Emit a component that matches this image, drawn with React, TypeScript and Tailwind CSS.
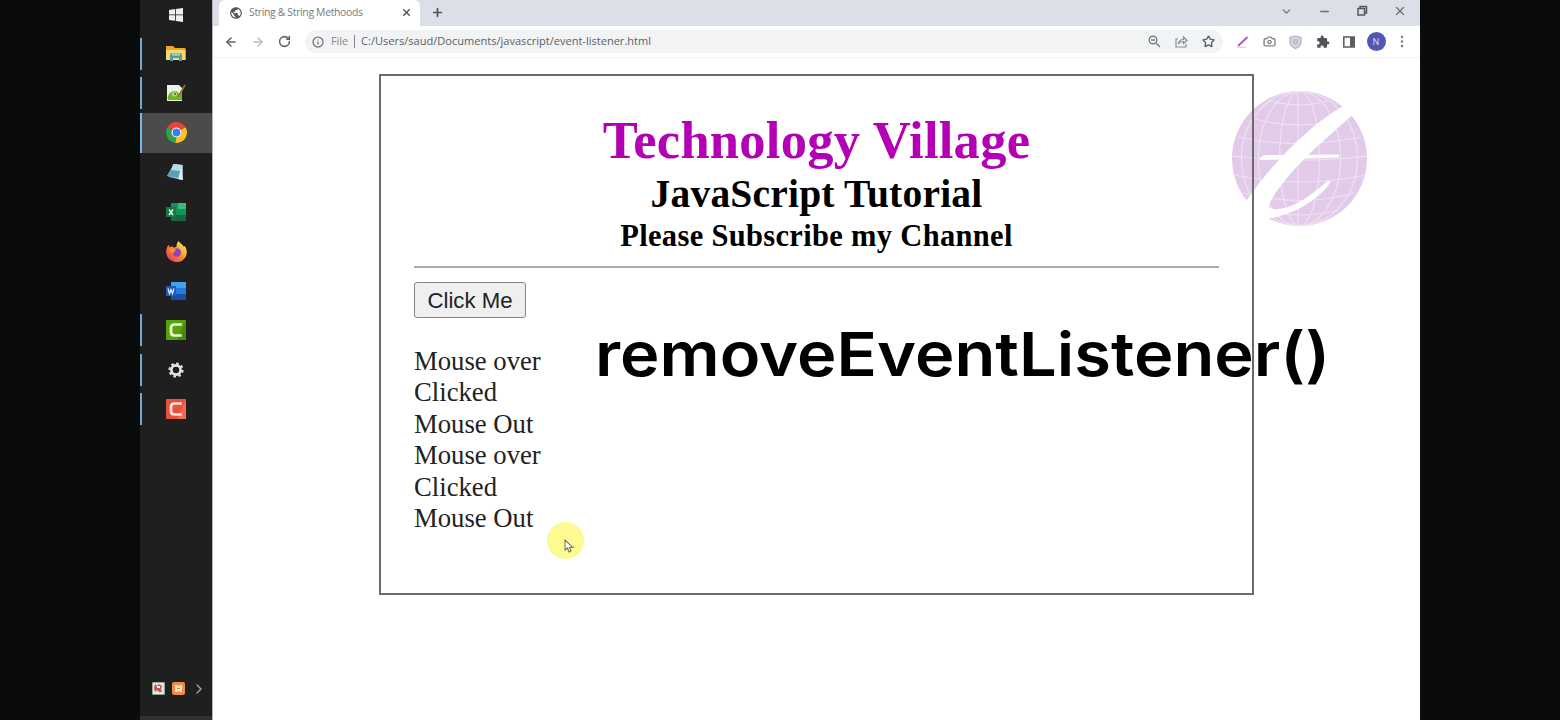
import React from "react";
import {
  ArrowLeft, ArrowRight, RotateCw, Info, Plus, X, ChevronDown, ChevronRight, Minus,
  Star, Camera,
} from "lucide-react";
import { MdExtension, MdPublic } from "react-icons/md";

const Windows = () => (
  <svg className="h-[14px] w-[14px]" viewBox="0 0 14 14" fill="#efefef">
    <path d="M0 2l6-.9v5.5H0zM6.8 1L14 0v6.6H6.8zM0 7.3h6v5.5L0 12zM6.8 7.3H14V14l-7.200-1z" />
  </svg>
);
const Folder = () => (
  <svg className="h-5 w-5" viewBox="0 0 20 20">
    <path d="M0 2h7l2 2h10.500v12H0z" fill="#e6a92c" />
    <path d="M0 6h19.500v10H0z" fill="#fbd668" />
    <path d="M4 17v-6q0-2 2-2h8q2 0 2 2v6h-3v-3H7v3z" fill="#4a9fa8" />
    <path d="M6 9h8v3H6z" fill="#8fc9b8" />
  </svg>
);
const Notepad = () => (
  <svg className="h-5 w-5" viewBox="0 0 20 20">
    <path d="M1 2h12l3 3v13H1z" fill="#eef3ea" />
    <path d="M2 17c-1-4 1-8 6-9 4 0 5 2 5 4l3-3v8z" fill="#6db81e" />
    <circle cx="8.500" cy="11" r="2.500" fill="#b6dc86" />
    <circle cx="9" cy="11" r="1.200" fill="#4b8820" />
    <path d="M12 14L19 2" stroke="#8b7a22" strokeWidth="1.600" />
  </svg>
);
const Chrome = () => (
  <svg className="h-[21px] w-[21px]" viewBox="0 0 20 20">
    <path d="M10 10L1.340 5A10 10 0 0 1 18.660 5z" fill="#e94435" />
    <path d="M10 10L18.660 5A10 10 0 0 1 10 20z" fill="#fcc31e" />
    <path d="M10 10L10 20A10 10 0 0 1 1.340 5z" fill="#2da14f" />
    <path d="M10 5.500h8.900L18.660 5H10z" fill="#e94435" />
    <path d="M13.900 12.200L10 20l-1-.1 1-5z" fill="#fcc31e" />
    <circle cx="10" cy="10" r="4.700" fill="#fff" />
    <circle cx="10" cy="10" r="3.700" fill="#3b7ded" />
  </svg>
);
const Notes = () => (
  <svg className="h-5 w-5" viewBox="0 0 20 20">
    <path d="M7 2l10 1-1 15-13-3z" fill="#8cc3d3" />
    <path d="M8 2l8 1-3 13-12-2z" fill="#b7dde6" />
    <path d="M5 8l9 1-1 7-12-2z" fill="#5a9fb5" />
    <path d="M16 4l1 14-5-1z" fill="#e4ecec" />
  </svg>
);
const Excel = () => (
  <svg className="h-5 w-5" viewBox="0 0 20 20">
    <path d="M5 1h15v18H5z" fill="#1c8f57" />
    <path d="M12 1h8v6h-8z" fill="#35bd7b" />
    <path d="M12 7h8v6h-8z" fill="#159257" />
    <path d="M5 13h15v6H5z" fill="#17663d" />
    <path d="M0 5h10v10H0z" fill="#137a43" />
    <path d="M3 7.500l4 5.500M7 7.500l-4 5.500" stroke="#e6f5ec" strokeWidth="1.500" />
  </svg>
);
const Firefox = () => (
  <svg className="h-[21px] w-[21px]" viewBox="0 0 20 20">
    <defs>
      <linearGradient id="fx" x1="1" y1="0" x2="0" y2="1">
        <stop offset="0.100" stopColor="#fff04a" />
        <stop offset="0.500" stopColor="#ff8a2b" />
        <stop offset="1" stopColor="#f0256b" />
      </linearGradient>
    </defs>
    <path d="M12 0c1 2 3 2.500 4.500 5L18 5c2 3 2.500 7 .5 10.500A10 10 0 0 1 .2 11C0 8 1 5.500 2.500 3.500L3.500 6 6 5l1.500 1.500L10 5.500C10 3 10.500 1.500 12 0z" fill="url(#fx)" />
    <circle cx="10.300" cy="11" r="4" fill="#8b47c2" />
    <path d="M3 8c3-1 5-1 7 1-2 .2-3 1-2.500 2.500-2 0-3.500-1.500-4.500-3.500z" fill="#ff9b28" />
  </svg>
);
const Word = () => (
  <svg className="h-5 w-5" viewBox="0 0 20 20">
    <path d="M5 1h15v6H5z" fill="#43a0ea" />
    <path d="M5 7h15v6H5z" fill="#277bd8" />
    <path d="M5 13h15v6H5z" fill="#174faa" />
    <path d="M0 5h10v10H0z" fill="#1c5cbc" />
    <path d="M2 7.500l1.500 5L5 8.500l1.500 4 1.500-5" stroke="#eaf2ff" strokeWidth="1.200" fill="none" />
  </svg>
);
const Gear = () => (
  <svg className="h-[16px] w-[16px]" viewBox="0 0 16 16" fill="none" stroke="#e8e8e8">
    <circle cx="8" cy="8" r="4.600" strokeWidth="2.600" />
    <circle cx="8" cy="8" r="6.600" strokeWidth="2" strokeDasharray="2.590 2.590" />
  </svg>
);
const CIcon = ({ red = false }: { red?: boolean }) => (
  <svg className="h-5 w-5" viewBox="0 0 20 20">
    <rect width="20" height="20" rx="1" fill={red ? "#e9513d" : "#58a20c"} />
    <path d="M20 0v20H11z" fill={red ? "#f26a50" : "#458907"} />
    <path d="M15.800 4.500H8.500Q5 4.500 5 8v4q0 3.500 3.500 3.500h7.300" fill="none" stroke={red ? "#ffe3dd" : "#ebf8d6"} strokeWidth="2.700" />
  </svg>
);

const apps: { icon: React.ReactNode; open?: boolean; active?: boolean }[] = [
  { icon: <Folder />, open: true },
  { icon: <Notepad />, open: true },
  { icon: <Chrome />, active: true },
  { icon: <Notes /> },
  { icon: <Excel /> },
  { icon: <Firefox /> },
  { icon: <Word /> },
  { icon: <CIcon />, open: true },
  { icon: <Gear />, open: true },
  { icon: <CIcon red />, open: true },
];

const Taskbar = () => (
  <aside className="flex w-[72px] shrink-0 flex-col bg-[#1f1f1f]">
    <div className="flex h-[34px] items-center justify-center pb-1"><Windows /></div>
    {apps.map((a, i) => (
      <div key={i} className={a.active ? "flex h-[39.500px] items-center bg-[#4b4b4b]" : "flex h-[39.500px] items-center"}>
        <div className={a.active ? "h-full w-[2px] bg-[#76b9ed]" : a.open ? "h-8 w-[2px] bg-[#6fa9cf]" : "h-8 w-[2px]"} />
        <div className="flex flex-1 justify-center pr-[2px]">{a.icon}</div>
      </div>
    ))}
    <div className="mt-auto flex h-[58px] items-start gap-2 pl-3 pt-6">
      <svg className="h-[13px] w-[13px]" viewBox="0 0 13 13">
        <rect width="13" height="13" fill="#dfe8de" stroke="#47644c" />
        <path d="M3 2l2 2 2-2 3 2-1 3 1 3H7L5 8l-2 2-1-4z" fill="#c9535b" />
        <path d="M5 4h3v2H5z" fill="#eee" />
      </svg>
      <svg className="-ml-px h-[13px] w-[13px]" viewBox="0 0 13 13">
        <rect width="13" height="13" rx="2" fill="#ef8b4b" />
        <path d="M3 3h2l1.500 1L8 3h2v7H8L6.500 9 5 10H3z" fill="#ffe0bd" />
        <path d="M5 6h3v1H5z" fill="#e98143" />
      </svg>
      <ChevronRight className="-ml-0.5 -mt-px h-[16px] w-[16px] text-[#a0a0a0]" strokeWidth={2.200} />
    </div>
    <div className="h-[4px] bg-[#303030]" />
  </aside>
);

const Browser = () => (
  <header className="h-[58px] shrink-0 border-b border-[#eff0f2] bg-white font-['Open_Sans',sans-serif]">
    <div className="flex h-[26px] bg-[#dcdfe8]">
      <div className="ml-[6px] flex h-[26px] w-[201px] items-center rounded-t-md bg-white pb-px pl-[10px] pr-[8px] text-[#777b80]">
        <MdPublic className="h-[14px] w-[14px] text-[#53575b]" />
        <span className="ml-[6px] whitespace-nowrap text-[10.400px] tracking-[-0.320px]">String &amp; String Methoods</span>
        <X className="ml-auto h-[11px] w-[11px] text-[#4b4e52]" strokeWidth={3} />
      </div>
      <Plus className="ml-[11px] mt-[6px] h-[13px] w-[13px] text-[#505359]" strokeWidth={3.200} />
      <div className="ml-auto flex items-center gap-[25px] pb-[4px] pr-[13px] text-[#6b6f74]">
        <ChevronDown className="h-[13px] w-[13px]" strokeWidth={2.200} />
        <Minus className="h-[13px] w-[13px]" strokeWidth={2.500} />
        <svg className="h-[12px] w-[12px]" viewBox="0 0 12 12" fill="none" stroke="#55585d" strokeWidth="1.500">
          <path d="M2 3.500h6.500V10H2zM4 3V1.500h6.500V8H9" />
        </svg>
        <X className="h-[14px] w-[14px]" strokeWidth={2.200} />
      </div>
    </div>
    <div className="flex h-[31px] items-center">
      <div className="flex w-[92px] items-center gap-[13px] pl-[11px]">
        <ArrowLeft className="h-[14px] w-[14px] text-[#606367]" strokeWidth={2.600} />
        <ArrowRight className="h-[14px] w-[14px] text-[#bcbec1]" strokeWidth={2.400} />
        <RotateCw className="h-[13px] w-[13px] text-[#606367]" strokeWidth={2.800} />
      </div>
      <div className="flex h-[23px] w-[918px] items-center rounded-full bg-[#f1f3f4] pl-[7px] text-[11.050px] text-[#5d6064]">
        <Info className="h-[12px] w-[12px] text-[#707377]" strokeWidth={2.500} />
        <span className="ml-[7px] text-[10.800px] text-[#85888b]">File</span>
        <span className="mx-[6px] h-[13px] w-px bg-[#85888b]" />
        <span className="whitespace-nowrap">C:/Users/saud/Documents/javascript/event-listener.html</span>
        <div className="ml-auto flex items-center gap-[14px] pr-[8px]">
          <svg className="h-[13px] w-[13px]" viewBox="0 0 13 13" fill="none" stroke="#7a7e82" strokeWidth="1.400">
            <circle cx="5" cy="5" r="3.800" /><path d="M8 8l4 4M3 5h4" />
          </svg>
          <svg className="h-[13px] w-[13px]" viewBox="0 0 13 13" fill="none" stroke="#8a8d90" strokeWidth="1.200">
            <path d="M3 4H1v8h10V9M3.500 9c0-3 2-4.500 5-4.500V2l3.500 3.500L8.500 8.500V6.500c-2 0-4 .5-5 2.500z" />
          </svg>
          <Star className="h-[13px] w-[13px] text-[#606367]" strokeWidth={2.600} />
        </div>
      </div>
      <div className="ml-auto flex items-center gap-[13.500px] pr-[13px]">
        <svg className="h-[13px] w-[13px]" viewBox="0 0 13 13" fill="none">
          <path d="M2 11L11.500 2" stroke="#a25bbd" strokeWidth="1.800" /><path d="M1 12.300h9" stroke="#e8bfe8" />
        </svg>
        <Camera className="h-[13px] w-[13px] text-[#858789]" strokeWidth={2.600} />
        <svg className="h-[14px] w-[13px]" viewBox="0 0 13 14" fill="#d4d6df" stroke="#b0b3bc" strokeWidth="1.200">
          <path d="M6.500 1L12 2.500v5q-.5 4-5.500 6-5-2-5.500-6v-5z" /><path d="M4 5h5M4.500 5v2l2 2 2-2V5" />
        </svg>
        <MdExtension className="h-[14px] w-[14px] text-[#505357]" />
        <svg className="h-[12px] w-[12px]" viewBox="0 0 12 12">
          <path d="M.8 1h10.400v10H.8z" fill="none" stroke="#5c5f63" strokeWidth="1.600" /><path d="M7 1h4v10H7z" fill="#5c5f63" />
        </svg>
        <span className="-mx-[2px] flex h-[19px] w-[19px] items-center justify-center rounded-full bg-[#4f59b5] text-[9px] text-[#d8dcf5]">N</span>
        <svg className="h-[13px] w-[10px]" viewBox="0 0 10 13" fill="#75787c">
          <circle cx="5" cy="2" r="1.200" /><circle cx="5" cy="6.500" r="1.200" /><circle cx="5" cy="11" r="1.200" />
        </svg>
      </div>
    </div>
  </header>
);

const Globe = () => (
  <svg className="absolute left-[1232px] top-[91px] h-[136px] w-[136px]" viewBox="0 0 136 136">
    <defs><clipPath id="ball"><circle cx="67.500" cy="67.500" r="67.500" /></clipPath></defs>
    <g clipPath="url(#ball)">
      <rect width="136" height="136" fill="#e2cae9" />
      <g fill="none" stroke="#f0e0f4" strokeWidth="1.200">
        <path d="M66 0v136M0 65q66 8 136 0" />
        <ellipse cx="67.500" cy="67.500" rx="20" ry="67" />
        <ellipse cx="67.500" cy="67.500" rx="41" ry="67" />
        <ellipse cx="67.500" cy="67.500" rx="58" ry="67" />
        <path d="M36 9q30 10 63 0M20 27q46 14 95 0M6 46q60 13 123 0M2 84q66 14 132 0M12 102q55 15 111 0M28 119q38 10 79 0" />
      </g>
    </g>
    <path d="M111 15C78 34 42 70 15 109L8 126L30 136L37 127.500C52 125 67 119 78 111Q90 103 99 91L96 89.500Q72 111 56 116C46 119 38 119 37 115C39 105 59 81 75 65C91 50 109 34 120 24.500L130 8z" fill="#fff" />
    <path d="M28 66.500q2-2 6-2.500L107 63.500v3L28 69z" fill="#fff" />
  </svg>
);

const log = ["Mouse over", "Clicked", "Mouse Out", "Mouse over", "Clicked", "Mouse Out"];

export default function App() {
  return (
    <div className="relative flex h-[720px] w-[1560px] overflow-hidden bg-[#090c0b]">
      <div className="w-[140px] shrink-0" />
      <Taskbar />
      <div className="flex w-[1208px] shrink-0 flex-col border-l border-[#b5b5b5] bg-white">
        <Browser />
        <Globe />
        <main className="relative ml-[166px] mt-[16px] h-[521px] w-[875px] border-2 border-[#6b6b6b] px-[33px] pt-[33px] font-['Liberation_Serif',serif]">
          <div className="text-center font-bold text-black">
            <h1 className="whitespace-nowrap text-[52.500px] leading-[62px] tracking-[0.280px] text-[#b400b4]">Technology Village</h1>
            <h2 className="mt-px whitespace-nowrap text-[39.500px] leading-[44px] tracking-[0.200px]">JavaScript Tutorial</h2>
            <h3 className="mt-px whitespace-nowrap text-[30.500px] leading-[38px] tracking-[0.320px]">Please Subscribe my Channel</h3>
          </div>
          <hr className="mt-[11px] w-[805px] border-t-2 border-[#a9a9a9]" />
          <button className="mt-[14px] flex h-[36px] w-[112px] items-center justify-center rounded-[3px] border-[1.500px] border-[#858585] bg-[#efefef] pt-px font-['Liberation_Sans',sans-serif] text-[22.200px] text-[#222]">Click Me</button>
          <div className="mt-[27.500px] text-[26.700px] leading-[31.500px] text-[#222]">
            {log.map((l, i) => <p key={i}>{l}</p>)}
          </div>
        </main>
      </div>
      <div className="absolute left-[595px] top-[317px] origin-left scale-x-[1.095] whitespace-nowrap font-['Inter',sans-serif] text-[61px] font-semibold leading-[74px] text-black">removeEventListener()</div>
      <div className="absolute left-[547px] top-[522px] h-[37px] w-[37px] rounded-full bg-[#fcfa90]">
        <svg className="ml-[17px] mt-[17px] h-[14px] w-[10px]" viewBox="0 0 10 14">
          <path d="M1 1v10l2.500-2 1.500 4 2-1-1.500-3.500H9z" fill="#fff" stroke="#77775c" strokeWidth="1.100" />
        </svg>
      </div>
    </div>
  );
}
